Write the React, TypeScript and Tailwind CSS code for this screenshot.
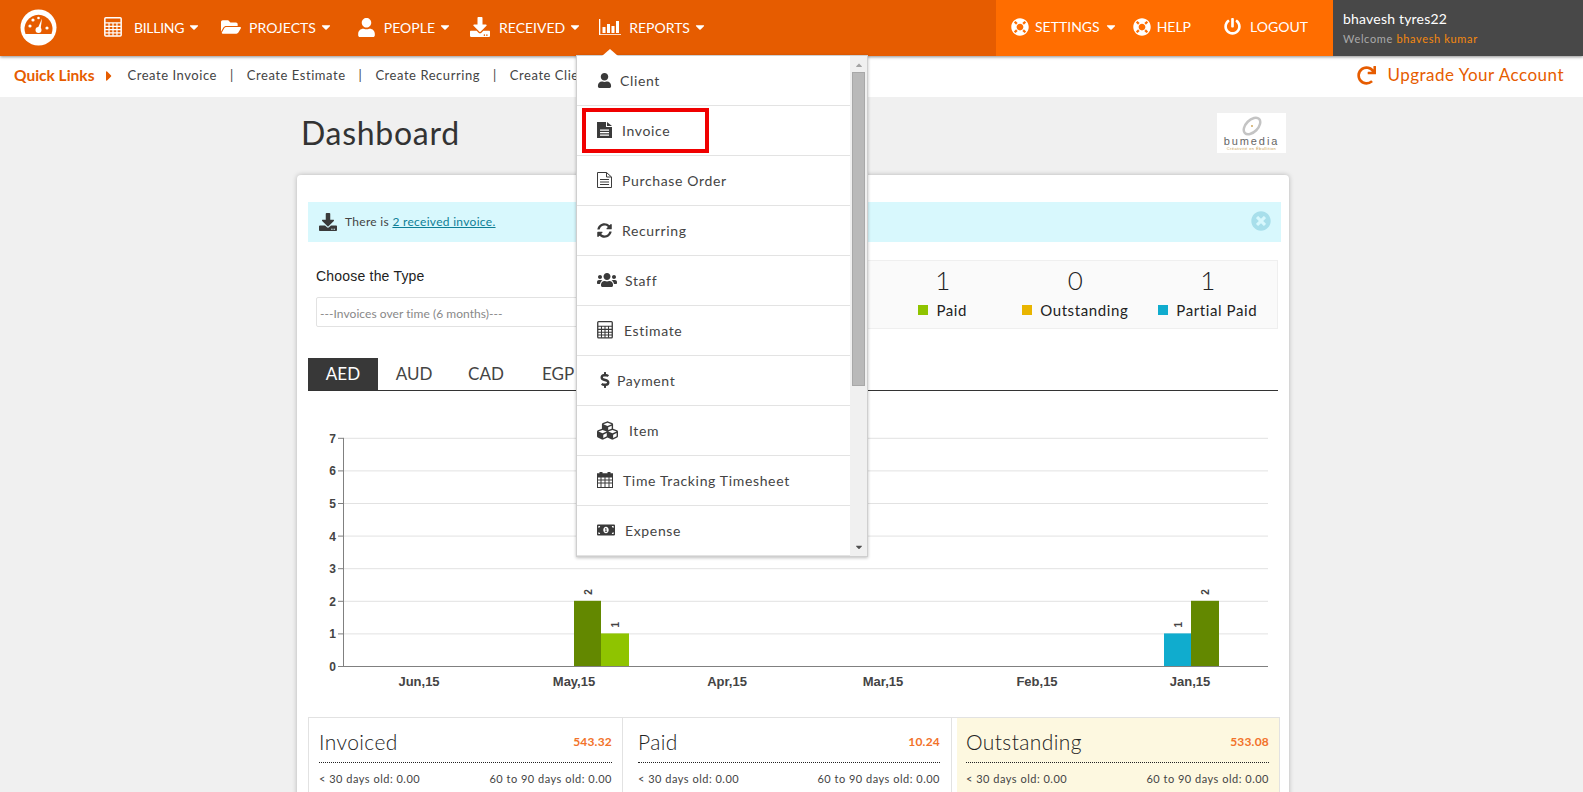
import React from 'react';
import {
  FaFolderOpen, FaUser, FaDownload, FaLifeRing, FaPowerOff, FaRedo,
  FaSyncAlt, FaUsers, FaDollarSign, FaCubes, FaMoneyBillAlt, FaTimesCircle,
  FaCaretRight, FaCaretDown, FaCaretUp,
} from 'react-icons/fa';

type IconProps = { size?: number; className?: string };

const GridIcon = ({ size = 16, className }: IconProps) => (
  <svg width={size} height={size * 1.1} viewBox="0 0 18 20" className={className} fill="none">
    <rect x="0.75" y="0.75" width="16.5" height="18.5" rx="1" stroke="currentColor" strokeWidth="1.5" />
    <path d="M1 6h16M1 9.5h16M1 12.75h16M1 16h16M5 6v13M9 6v13M13 6v13" stroke="currentColor" strokeWidth="1.2" />
  </svg>
);

const ReportsIcon = ({ size = 22, className }: IconProps) => (
  <svg width={size} height={size * 0.75} viewBox="0 0 22 16.5" className={className} fill="currentColor">
    <rect x="0" y="0" width="1.3" height="16.5" />
    <rect x="0" y="15.2" width="22" height="1.3" />
    <rect x="3.5" y="8" width="3" height="6" />
    <rect x="8" y="5" width="3" height="9" />
    <rect x="12.5" y="7" width="3" height="7" />
    <rect x="17" y="2" width="3" height="12" />
  </svg>
);

const DocIcon = ({ size = 16, className }: IconProps) => (
  <svg width={size * 0.94} height={size} viewBox="0 0 15 16" className={className} fill="currentColor">
    <path d="M0 0h9v5h6v11H0z" />
    <path d="M10 0l5 4h-5z" />
    <path d="M3 7.5h9v1.2H3zM3 10h9v1.2H3zM3 12.5h9v1.2H3z" fill="#fff" />
  </svg>
);

const DocOutlineIcon = ({ size = 16, className }: IconProps) => (
  <svg width={size * 0.94} height={size} viewBox="0 0 15 16" className={className} fill="none" stroke="currentColor">
    <path d="M0.5 0.5h9l5 4.5v10.5h-14z" />
    <path d="M9.5 0.5v4.5h5" />
    <path d="M3 7.5h9M3 10h9M3 12.5h9" />
  </svg>
);

const CalendarIcon = ({ size = 16, className }: IconProps) => (
  <svg width={size} height={size} viewBox="0 0 16 16" className={className} fill="none" stroke="currentColor">
    <rect x="0.5" y="2" width="15" height="13.5" />
    <rect x="0.5" y="2" width="15" height="3" fill="currentColor" />
    <path d="M0.5 8h15M0.5 11h15M4 5v10M8 5v10M12 5v10" />
    <rect x="3" y="0.5" width="2" height="3" fill="currentColor" />
    <rect x="11" y="0.5" width="2" height="3" fill="currentColor" />
  </svg>
);

const navItems = [
  { label: 'BILLING', icon: GridIcon, size: 18, box: 'w-[30px]', text: 'tracking-[-0.3px]', item: 'mr-[20px]' },
  { label: 'PROJECTS', icon: FaFolderOpen, size: 20, box: 'w-[28px]', text: '', item: 'mr-[24px]' },
  { label: 'PEOPLE', icon: FaUser, size: 19, box: 'w-[27px]', text: '', item: 'mr-[18px]' },
  { label: 'RECEIVED', icon: FaDownload, size: 20, box: 'w-[29px]', text: '', item: 'mr-[17px]' },
  { label: 'REPORTS', icon: ReportsIcon, size: 22, box: 'w-[30px]', text: '', item: '' },
];

const menuItems = [
  { label: 'Client', icon: FaUser, gap: 'mr-[8px]', size: 15 },
  { label: 'Invoice', icon: DocIcon, gap: 'mr-[10px]', size: 16 },
  { label: 'Purchase Order', icon: DocOutlineIcon, gap: 'mr-[10px]', size: 16 },
  { label: 'Recurring', icon: FaSyncAlt, gap: 'mr-[10px]', size: 15 },
  { label: 'Staff', icon: FaUsers, gap: 'mr-[8px]', size: 20 },
  { label: 'Estimate', icon: GridIcon, gap: 'mr-[11px]', size: 16 },
  { label: 'Payment', icon: FaDollarSign, gap: 'mr-[4px]', size: 16 },
  { label: 'Item', icon: FaCubes, gap: 'mr-[11px]', size: 21 },
  { label: 'Time Tracking Timesheet', icon: CalendarIcon, gap: 'mr-[10px]', size: 16 },
  { label: 'Expense', icon: FaMoneyBillAlt, gap: 'mr-[10px]', size: 18 },
];

const quickLinks = ['Create Invoice', 'Create Estimate', 'Create Recurring', 'Create Client'];
const tabs = ['AUD', 'CAD', 'EGP'];

const stats = [
  { value: '1', label: 'Paid', color: 'bg-[#8fc400]' },
  { value: '0', label: 'Outstanding', color: 'bg-[#e9b500]' },
  { value: '1', label: 'Partial Paid', color: 'bg-[#10acce]' },
];

const summary = [
  { title: 'Invoiced', amount: '543.32', cell: 'w-[314px] pl-[10px] pr-[10px] border-r border-[#e2e2e2]' },
  { title: 'Paid', amount: '10.24', cell: 'w-[329px] pl-[15px] pr-[11px] border-r border-[#e2e2e2]' },
  { title: 'Outstanding', amount: '533.08', cell: 'w-[322px] ml-[5px] pl-[9px] pr-[10px] bg-[#fdf8e0]' },
];

const yTicks = [0, 1, 2, 3, 4, 5, 6, 7];
const months = [
  { label: 'Jun,15', x: 111 },
  { label: 'May,15', x: 266 },
  { label: 'Apr,15', x: 419 },
  { label: 'Mar,15', x: 575 },
  { label: 'Feb,15', x: 729 },
  { label: 'Jan,15', x: 882 },
];
const bars = [
  { x: 266, w: 27, v: 2, c: '#638800' },
  { x: 293, w: 28, v: 1, c: '#8fc400' },
  { x: 856, w: 27, v: 1, c: '#10acce' },
  { x: 883, w: 28, v: 2, c: '#638800' },
];

const Chart = () => {
  const y = (v: number) => 266 - v * 32.6;
  return (
    <svg width="972" height="300" className="block mt-[9px]">
      {yTicks.map((t) => (
        <g key={t}>
          {t > 0 && <line x1="35" x2="960" y1={y(t) + 0.5} y2={y(t) + 0.5} stroke="#e2e2e2" />}
          <line x1="30" x2="35" y1={y(t) + 0.5} y2={y(t) + 0.5} stroke="#808080" />
          <text x="28" y={y(t) + 5} textAnchor="end" fontFamily="Liberation Sans" fontWeight="700" fontSize="12" fill="#444">
            {t}
          </text>
        </g>
      ))}
      {bars.map((b) => (
        <g key={b.x}>
          <rect x={b.x} y={y(b.v)} width={b.w} height={b.v * 32.6} fill={b.c} />
          <text
            transform={`translate(${b.x + b.w / 2 + 4} ${y(b.v) - 6}) rotate(-90)`}
            fontFamily="Liberation Sans"
            fontSize="10"
            fontWeight="700"
            fill="#444"
          >
            {b.v}
          </text>
        </g>
      ))}
      <line x1="35.5" x2="35.5" y1={y(7)} y2="267" stroke="#808080" />
      <line x1="35" x2="960" y1="266.5" y2="266.5" stroke="#808080" />
      {months.map((m) => (
        <text key={m.label} x={m.x} y="286" textAnchor="middle" fontFamily="Liberation Sans" fontWeight="700" fontSize="13" fill="#444">
          {m.label}
        </text>
      ))}
    </svg>
  );
};

const GaugeLogo = () => (
  <svg width="37" height="37" viewBox="0 0 37 37" className="ml-[20px] mr-[47px]">
    <circle cx="18.5" cy="18.5" r="18" fill="#fff" />
    <path d="M5.5 25 A14 14 0 1 1 31.5 25 Z" fill="#e65c00" />
    <path d="M17 21 L22 9.5 L20.5 21 Z" fill="#fff" />
    <circle cx="18.5" cy="21" r="3" fill="#fff" />
    <circle cx="10" cy="17" r="1.6" fill="#fff" />
    <circle cx="13" cy="11" r="1.6" fill="#fff" />
    <circle cx="18.5" cy="9" r="1.3" fill="#fff" />
    <circle cx="27" cy="19" r="1.6" fill="#fff" />
  </svg>
);

const BumediaLogo = () => (
  <div className="w-[69px] h-[40px] bg-white flex flex-col items-center pt-[3px]">
    <svg width="24" height="20" viewBox="0 0 24 20" className="shrink-0">
      <ellipse cx="12" cy="10" rx="6" ry="10" transform="rotate(45 12 10)" fill="none" stroke="#c4c4c4" strokeWidth="2.5" />
      <circle cx="12" cy="10" r="0.9" fill="#c9a050" />
    </svg>
    <span className="text-[11px] leading-[10px] tracking-[1.9px] text-[#666] font-['Liberation_Sans',sans-serif]">bumedia</span>
    <span className="text-[4px] leading-[5px] tracking-[0.4px] text-[#c9a050] font-['Liberation_Sans',sans-serif]">Créativité en Ébullition</span>
  </div>
);

const ReportsMenu = () => (
  <div className="absolute left-[576px] top-[55px] w-[292px] h-[502px] bg-white border border-[#cfcfcf] shadow-[0_1px_3px_rgba(0,0,0,0.25)] flex z-20">
    <div className="absolute -top-[7px] left-[25px] w-0 h-0 border-l-[8px] border-r-[8px] border-b-[7px] border-l-transparent border-r-transparent border-b-white" />
    <div className="w-[273px] shrink-0 overflow-hidden">
      {menuItems.map((m) => {
        const Icon = m.icon;
        return (
          <div key={m.label} className="relative h-[50px] flex items-center pl-[20px] pb-[1px] border-b border-[#e3e3e3] text-[14px] tracking-[0.65px] text-[#444]">
            <Icon size={m.size} className={`${m.gap} text-[#3a3a3a] shrink-0`} />
            <span>{m.label}</span>
            {m.label === 'Invoice' && (
              <div className="absolute left-[5px] top-[2px] w-[127px] h-[45px] border-[4px] border-[#f00000]" />
            )}
          </div>
        );
      })}
    </div>
    <div className="w-[17px] bg-[#f0f0f0] flex flex-col items-center">
      <FaCaretUp size={10} className="text-[#a3a3a3] mt-[4px]" />
      <div className="w-[13px] h-[314px] bg-[#b9b9b9] border border-[#a8a8a8] mt-[2px]" />
      <FaCaretDown size={10} className="text-[#505050] mt-auto mb-[4px]" />
    </div>
  </div>
);

const App = () => {
  return (
    <div className="relative h-[792px] overflow-hidden bg-[#f0f0f0] font-['Lato','Open_Sans',sans-serif]">
      <header className="relative z-10 h-[56px] flex bg-[#e65c00] text-white shadow-[0_1px_3px_rgba(0,0,0,0.45)]">
        <div className="flex items-center w-[996px] pb-[1px]">
          <GaugeLogo />
          {navItems.map((n) => {
            const Icon = n.icon;
            return (
              <div key={n.label} className={`flex items-center pb-[1px] ${n.item}`}>
                <span className={`${n.box} flex`}><Icon size={n.size} /></span>
                <span className={`text-[14px] ${n.text}`}>{n.label}</span>
                <FaCaretDown size={14} className="ml-[3px]" />
              </div>
            );
          })}
        </div>
        <div className="w-[337px] bg-[#ff6d00] flex items-center pl-[15px] pb-[3px] text-[14px]">
          <FaLifeRing size={18} className="mr-[6px]" />
          <span>SETTINGS</span>
          <FaCaretDown size={14} className="ml-[4px] mr-[15px]" />
          <FaLifeRing size={18} className="mr-[6px]" />
          <span>HELP</span>
          <FaPowerOff size={17} className="ml-[33px] mr-[9px]" />
          <span>LOGOUT</span>
        </div>
        <div className="flex-1 bg-[#484848] pl-[10px] pt-[10px]">
          <div className="text-[14px] leading-[18px] tracking-[0.2px]">bhavesh tyres22</div>
          <div className="text-[11px] leading-[14px] mt-[4px] tracking-[0.65px] text-[#aaa]">
            Welcome <span className="text-[#f5880f]">bhavesh kumar</span>
          </div>
        </div>
      </header>

      <div className="h-[41px] bg-white flex items-center pl-[14px] pr-[19px] pb-[2px] text-[13px] text-[#444] tracking-[0.55px]">
        <span className="font-bold text-[15.5px] tracking-normal text-[#e65c00]">Quick Links</span>
        <FaCaretRight size={16} className="text-[#e65c00] ml-[7px] mr-[10px]" />
        {quickLinks.map((q, i) => (
          <React.Fragment key={q}>
            {i > 0 && <span className="mx-[13px]">|</span>}
            <span>{q}</span>
          </React.Fragment>
        ))}
        <div className="ml-auto flex items-center pb-[1px] text-[#e65c00] text-[17px] tracking-[0.5px]">
          <FaRedo size={19} className="mr-[11px]" />
          <span>Upgrade Your Account</span>
        </div>
      </div>

      <main className="w-[992px] ml-[297px]">
        <div className="h-[78px] flex items-start justify-between pl-[5px] pr-[3px]">
          <h1 className="text-[32px] leading-[40px] mt-[16px] -ml-[1px] tracking-[0.7px] text-[#333]">Dashboard</h1>
          <div className="mt-[16px]"><BumediaLogo /></div>
        </div>

        <div className="bg-white rounded-[4px] shadow-[0_0_5px_rgba(0,0,0,0.25)] px-[11px] pt-[27px] h-[640px]">
          <div className="h-[40px] w-[973px] bg-[#d8f8fd] flex items-center pl-[11px] pr-[10px] text-[12px] tracking-[0.3px] text-[#444]">
            <FaDownload size={18} className="text-[#3a3a3a] mr-[8px]" />
            <span>There is <span className="underline text-[#0e7f96]">2 received invoice.</span></span>
            <FaTimesCircle size={20} className="ml-auto mb-[2px] text-[#a8dfeb]" />
          </div>

          <div className="flex mt-[18px] h-[69px]">
            <div className="pl-[8px] w-[300px]">
              <div className="text-[14px] leading-[16px] mt-[8px] tracking-[0.2px] text-[#222] font-['Liberation_Sans',sans-serif]">Choose the Type</div>
              <div className="h-[30px] w-[400px] border border-[#e2e2e2] rounded-[2px] mt-[13px] flex items-center pl-[3px] pt-[3px] text-[12px] tracking-[0.05px] text-[#888]">
                ---Invoices over time (6 months)---
              </div>
            </div>
            <div className="ml-auto w-[560px] h-[69px] bg-[#fafafa] border border-[#efefef] flex justify-end pr-[3px] text-[#222]">
              {stats.map((s) => (
                <div key={s.label} className="w-[132.5px] flex flex-col items-center">
                  <div className="text-[26px] leading-[30px] mt-[4px] font-light text-[#222]">{s.value}</div>
                  <div className="flex items-center text-[15px] leading-[18px] mt-[6px] tracking-[0.6px]">
                    <span className={`w-[10px] h-[10px] mr-[8px] ${s.color}`} />
                    {s.label}
                  </div>
                </div>
              ))}
            </div>
          </div>

          <div className="flex mt-[29px] w-[970px] h-[33px] border-b border-[#333] text-[17px] text-[#444]">
            <div className="w-[70px] h-[32px] bg-[#383838] text-white flex items-center justify-center">AED</div>
            {tabs.map((t) => (
              <div key={t} className="w-[72px] h-[32px] flex items-center justify-center">{t}</div>
            ))}
          </div>

          <Chart />

          <div className="flex w-[972px] h-[90px] border border-[#e2e2e2] mt-[17px]">
            {summary.map((s) => (
              <div key={s.title} className={s.cell}>
                <div className="flex items-center justify-between h-[45px] pt-[4px] border-b border-dotted border-[#222]">
                  <span className="text-[21px] font-light tracking-[0.4px] text-[#222]">{s.title}</span>
                  <span className="text-[12px] font-bold text-[#f2722a] tracking-[0.2px]">{s.amount}</span>
                </div>
                <div className="flex justify-between text-[11px] leading-[14px] mt-[9px] text-[#444] tracking-[0.5px]">
                  <span>&lt; 30 days old: 0.00</span>
                  <span>60 to 90 days old: 0.00</span>
                </div>
              </div>
            ))}
          </div>
        </div>
      </main>

      <ReportsMenu />
    </div>
  );
};

export default App;
